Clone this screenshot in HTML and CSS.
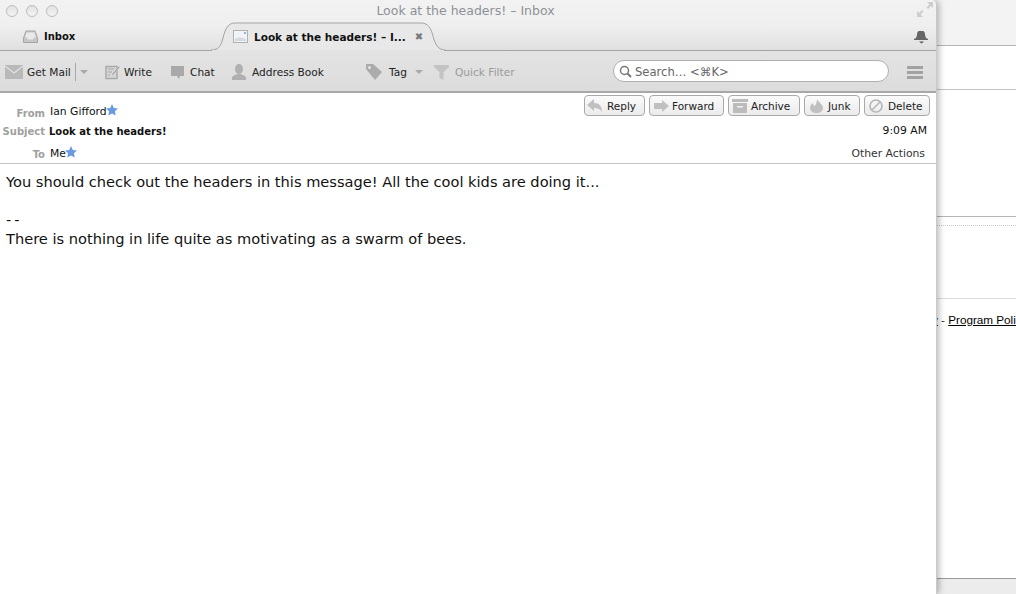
FILE: index.html
```html
<!DOCTYPE html>
<html>
<head>
<meta charset="utf-8">
<title>Look at the headers! - Inbox</title>
<link rel="stylesheet" href="styles.css">
</head>
<body>
<div class="backdrop">
  <div class="bd-top"></div>
  <div class="bd-a"></div>
  <div class="bd-b"></div>
  <div class="bd-c"></div>
  <div class="bd-d"><span class="bd-link">y</span> - <span class="bd-link">Program Policies</span></div>
  <div class="bd-bottom"></div>
</div>
<div class="window">
  <div class="chrome">
    <div class="titlebar">
      <div class="lights"><i></i><i></i><i></i></div>
      <div class="title">Look at the headers! – Inbox</div>
      <svg class="fs" width="16" height="15" viewBox="0 0 16 15"><path d="M10 0h6v6l-2-2-3 3-1.500-1.500 3-3zM6 15H0V9l2 2 3-3 1.500 1.500-3 3z" fill="#cdcdcd"/></svg>
    </div>
    <div class="tabbar">
      <svg class="tab-shape" width="240" height="29" viewBox="0 0 240 29"><path d="M4 28c8 0 10-4 12-12 2-9 5-15 12-15h186c7 0 10 5 12 13s5 14 12 14" fill="#e8e8e8" stroke="#a3a3a3"/><path d="M5 28h232v1H5z" fill="#e3e3e3"/></svg>
      <div class="tab-inbox">
        <svg width="15" height="13" viewBox="0 0 15 13"><path d="M3 1h9l2.500 7v4.500H.5V8z" fill="#c6c6c6" stroke="#a5a5a5"/><path d="M3.500 2.500h8l1.500 5h-2l-1 2h-5l-1-2H2z" fill="#e9e9e9"/></svg>
        <b>Inbox</b>
      </div>
      <div class="tab-active">
        <svg width="15" height="13" viewBox="0 0 15 13"><rect x=".5" y=".5" width="14" height="12" fill="#f0f3f7" stroke="#b0b0b0"/><rect x="11" y="2" width="2" height="2" fill="#8fb4dc"/><path d="M2 9c3-2 7-2 11 0v2H2z" fill="#d5d9de"/></svg>
        <b>Look at the headers! – I...</b>
        <span class="tab-x">✖</span>
      </div>
      <svg class="bell" width="14" height="14" viewBox="0 0 14 14"><path d="M3 5c0-3 1-4 2-4h4c1 0 2 1 2 4l1 3 2 1v1H0V9l2-1z" fill="#666"/><path d="M5 11.500h5l-2.500 2z" fill="#555"/></svg>
    </div>
    <div class="toolbar">
      <div class="tool t-getmail">
        <svg width="18" height="14" viewBox="0 0 18 14"><rect width="18" height="14" fill="#b9b9b9"/><path d="M0 1l9 7 9-7" fill="none" stroke="#e2e2e2" stroke-width="1.200"/></svg>
        <span>Get Mail</span><i class="sep"></i><i class="caret"></i>
      </div>
      <div class="tool t-write">
        <svg width="15" height="15" viewBox="0 0 15 15"><path d="M1 1.500h11v12H1z" fill="#d6d6d6" stroke="#aaa" stroke-width="1.500"/><path d="M3 4h6M3 7h4M3 10h2" stroke="#aaa"/><path d="M14 1l1 1-7 8-2 1 1-2z" fill="#8e8e8e" stroke="#e6e6e6" stroke-width=".6"/></svg>
        <span>Write</span>
      </div>
      <div class="tool t-chat">
        <svg width="13" height="13" viewBox="0 0 13 13"><path d="M0 0h13v10H9l-1 3-2-3H0z" fill="#a9a9a9"/></svg>
        <span>Chat</span>
      </div>
      <div class="tool t-book">
        <svg width="14" height="16" viewBox="0 0 14 16"><ellipse cx="7" cy="5" rx="4" ry="5" fill="#b0b0b0"/><path d="M0 16v-2c0-2 3-3 5-4h4c2 1 5 2 5 4v2z" fill="#b0b0b0"/></svg>
        <span>Address Book</span>
      </div>
      <div class="tool t-tag">
        <svg width="16" height="16" viewBox="0 0 16 16"><path d="M0 5V0h7l9 8-7 8z" fill="#ababab"/><circle cx="3.500" cy="3.500" r="1.500" fill="#e4e4e4"/></svg>
        <span>Tag</span><i class="caret caret-tag"></i>
      </div>
      <div class="tool t-filter">
        <svg width="15" height="15" viewBox="0 0 15 15"><path d="M0 0h15v2L9.500 7v8l-4-2V7L0 2z" fill="#c3c3c3"/></svg>
        <span>Quick Filter</span>
      </div>
      <div class="search">
        <svg width="13" height="13" viewBox="0 0 13 13"><circle cx="5.500" cy="5.500" r="4" fill="none" stroke="#777" stroke-width="1.500"/><path d="M8.500 8.500l3.500 3.500" stroke="#777" stroke-width="2"/></svg>
        <span class="search-text">Search… &lt;⌘K&gt;</span>
      </div>
      <div class="menu"><i></i><i></i><i></i></div>
    </div>
  </div>
  <div class="headers">
    <div class="hdr-row hdr-from">
      <div class="hdr-left">
        <span class="label">From</span><span class="value">Ian Gifford</span>
        <svg class="star" width="12" height="12" viewBox="0 0 12 12"><path d="M6 0l1.800 3.900 4.200.5-3.100 2.900.8 4.200L6 9.400l-3.700 2.100.8-4.200L0 4.400l4.200-.5z"/></svg>
      </div>
      <div class="actions">
        <div class="btn b-reply">
          <svg width="16" height="13" viewBox="0 0 16 13"><path d="M0 6l7-6v4c5 0 8 3 8 9-2-3-4-4-8-4v3z" fill="#c0c0c0"/></svg>Reply
        </div>
        <div class="btn b-forward">
          <svg width="15" height="12" viewBox="0 0 15 12"><path d="M0 3h8V0l7 6-7 6V9H0z" fill="#c0c0c0"/></svg>Forward
        </div>
        <div class="btn b-archive">
          <svg width="16" height="14" viewBox="0 0 16 14"><rect width="16" height="3" fill="#bcbcbc"/><rect x="1" y="4" width="14" height="10" fill="#bcbcbc"/><rect x="5" y="7" width="6" height="1.500" fill="#efefef"/></svg>Archive
        </div>
        <div class="btn b-junk">
          <svg width="13" height="14" viewBox="0 0 13 14"><path d="M7 0c1 3 6 5 6 9 0 3-3 5-6.500 5S0 12 0 9c0-2 1-4 3-5 0 2 1 3 2 3 1-2 2-4 2-7z" fill="#c0c0c0"/></svg>Junk
        </div>
        <div class="btn b-delete">
          <svg width="14" height="14" viewBox="0 0 14 14"><circle cx="7" cy="7" r="6" fill="none" stroke="#b5b5b5" stroke-width="1.600"/><path d="M3 11l8-8" stroke="#b5b5b5" stroke-width="1.600"/></svg>Delete
        </div>
      </div>
    </div>
    <div class="hdr-row hdr-subject">
      <div class="hdr-left"><span class="label">Subject</span><b class="value">Look at the headers!</b></div>
      <div class="date">9:09 AM</div>
    </div>
    <div class="hdr-row hdr-to">
      <div class="hdr-left">
        <span class="label">To</span><span class="value">Me</span>
        <svg class="star" width="12" height="12" viewBox="0 0 12 12"><path d="M6 0l1.800 3.900 4.200.5-3.100 2.900.8 4.200L6 9.400l-3.700 2.100.8-4.200L0 4.400l4.200-.5z"/></svg>
      </div>
      <div class="other">Other Actions</div>
    </div>
  </div>
  <div class="message">
    <p>You should check out the headers in this message! All the cool kids are doing it...</p>
    <p class="gap">--</p>
    <p>There is nothing in life quite as motivating as a swarm of bees.</p>
  </div>
</div>
</body>
</html>
```
FILE: styles.css
```css
html, body { margin: 0; padding: 0; height: 594px; overflow: hidden; background: #fff; }
body { position: relative; width: 1016px; font-family: "DejaVu Sans", sans-serif; color: #111; }

.backdrop { position: absolute; inset: 0 0 0 936px; background: #fff; display: flex; flex-direction: column; }
.bd-top { height: 45px; background: #f3f3f3; border-bottom: 1px solid #b4b4b4; }
.bd-a { height: 43px; border-bottom: 1px solid #c4c4c4; margin-bottom: 126px; }
.bd-b { border-bottom: 1px solid #b4b4b4; margin-bottom: 8px; }
.bd-c { border-bottom: 1px dotted #c8c8c8; margin-bottom: 72px; }
.bd-d { border-top: 1px solid #ddd; padding-top: 14px; font: 11.700px/14px "Liberation Sans", sans-serif; white-space: nowrap; color: #333; margin-left: -4px; height: 280px; box-sizing: border-box; }
.bd-link { text-decoration: underline; color: #000; }
.bd-bottom { flex: 1; background: #ececec; border-top: 1px solid #999; }

.window { position: absolute; left: 0; top: 0; width: 936px; height: 594px; background: #fff; box-shadow: 1px 0 0 #c9c9c9, 3px 0 6px rgba(0,0,0,.28); display: flex; flex-direction: column; border-radius: 0 5px 0 0; }

.chrome { height: 93px; box-sizing: border-box; border-bottom: 2px solid #a8a8a8; border-radius: 0 5px 0 0; background: linear-gradient(#f2f2f2 0, #efefef 26px, #e0e0e0 50px, #e3e3e3 51px, #dcdcdc 91px); }

.titlebar { height: 22px; display: flex; align-items: center; position: relative; }
.lights { display: flex; gap: 8px; padding: 0 0 1px 6px; }
.lights i { width: 12px; height: 12px; box-sizing: border-box; border-radius: 50%; border: 1px solid #bcbcbc; background: linear-gradient(#e2e2e2, #f4f4f4); }
.title { position: absolute; left: 0; right: 5px; top: 3px; text-align: center; font-size: 12.500px; line-height: 16px; color: #8d9196; }
.fs { position: absolute; right: 3px; top: 2px; }

.tabbar { height: 28px; border-bottom: 1px solid #a3a3a3; display: flex; position: relative; font-size: 10px; }
.tabbar b { font-weight: bold; color: #111; }
.tab-shape { position: absolute; left: 207px; top: 0; }
.tab-inbox { position: absolute; left: 23px; top: 8px; display: flex; align-items: center; gap: 6px; }
.tab-active { position: absolute; left: 233px; top: 8px; display: flex; align-items: center; gap: 6px; white-space: nowrap; }
.tab-active b { font-size: 10.500px; }
.tab-x { color: #777; font-size: 10px; font-weight: bold; margin-left: 3px; }
.bell { position: absolute; left: 914px; top: 8px; }

.toolbar { height: 41px; box-sizing: border-box; padding-top: 1px; display: flex; align-items: center; position: relative; font-size: 10.600px; color: #222; }
.tool { display: flex; align-items: center; gap: 4px; }
.t-getmail { margin-left: 5px; width: 100px; }
.sep { width: 1px; height: 18px; background: #a8a8a8; }
.caret { width: 0; height: 0; border: 4px solid transparent; border-top: 4px solid #aaa; border-bottom: 0; }
.caret-tag { margin-left: 1px; }
.t-write { width: 66px; gap: 4px; }
.t-chat { width: 61px; gap: 6px; }
.t-book { width: 134px; gap: 6px; }
.t-tag { width: 68px; gap: 7px; }
.t-filter { gap: 6px; color: #9a9a9a; }
.search { position: absolute; left: 613px; top: 9px; width: 276px; height: 22px; box-sizing: border-box; padding-left: 5px; border: 1px solid #b0b0b0; border-radius: 11px; background: #fff; display: flex; align-items: center; gap: 3px; font-size: 11.600px; color: #666; }
.search-text { padding-top: 1px; }
.menu { position: absolute; left: 907px; top: 15px; display: flex; flex-direction: column; gap: 2px; }
.menu i { width: 16px; height: 3px; background: #a2a2a2; }

.headers { height: 71px; box-sizing: border-box; border-bottom: 1px solid #c4c4c4; font-size: 10.800px; display: flex; flex-direction: column; }
.hdr-row { display: flex; justify-content: space-between; }
.hdr-from { height: 29px; padding: 2px 6px 0 0; box-sizing: border-box; }
.hdr-subject { height: 20px; padding-right: 9px; }
.hdr-to { padding-right: 11px; }
.hdr-left { display: flex; align-items: center; height: 16px; }
.hdr-from .hdr-left { margin-top: 8px; }
.hdr-subject .hdr-left { margin-top: 1px; }
.hdr-to .hdr-left { margin-top: 3px; }
.label { width: 45px; text-align: right; color: #a0a0a0; font-weight: bold; font-size: 10px; }
.hdr-from .label { margin-top: 4px; }
.hdr-to .label { margin-top: 2px; }
.value { margin-left: 5px; color: #111; }
.hdr-subject .value { margin-left: 4px; font-size: 10px; }
.star { fill: #6a9be0; margin-left: -1px; margin-top: -3px; }
.actions { display: flex; gap: 4px; }
.btn { height: 21px; box-sizing: border-box; display: flex; align-items: center; padding-left: 2px; border: 1px solid #a9a9a9; border-radius: 4px; background: linear-gradient(#fbfbfb, #ebebeb); font-size: 10.500px; color: #222; }
.b-reply { width: 61px; gap: 4px; }
.b-forward { width: 75px; gap: 3px; padding-left: 4px; }
.b-archive { width: 72px; gap: 3px; padding-left: 3px; }
.b-junk { width: 56px; gap: 5px; padding-left: 5px; }
.b-delete { width: 66px; gap: 5px; padding-left: 4px; }
.date { line-height: 16px; margin-top: 1px; }
.other { line-height: 16px; margin-top: 4px; color: #333; }

.message { padding: 8px 0 0 6px; font-size: 14.600px; line-height: 19px; color: #111; }
.message p { margin: 0; }
.message .gap { margin-top: 19px; letter-spacing: 3px; }
```
